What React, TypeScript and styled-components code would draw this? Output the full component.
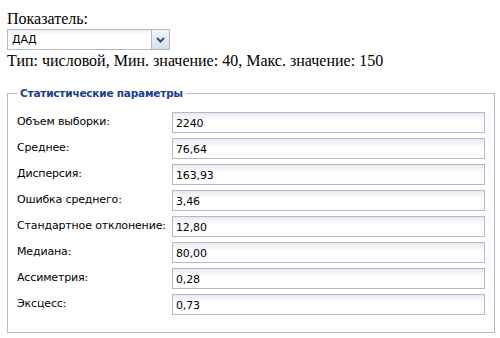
import styled, { createGlobalStyle } from "styled-components";

const stats = [
  { label: "Объем выборки:", value: "2240" },
  { label: "Среднее:", value: "76,64" },
  { label: "Дисперсия:", value: "163,93" },
  { label: "Ошибка среднего:", value: "3,46" },
  { label: "Стандартное отклонение:", value: "12,80" },
  { label: "Медиана:", value: "80,00" },
  { label: "Ассиметрия:", value: "0,28" },
  { label: "Эксцесс:", value: "0,73" },
];

const App = () => {
  return (
    <>
      <GlobalStyle />
      <StyledPage>
        <StyledCaption>Показатель:</StyledCaption>
        <StyledSelect>
          <span>ДАД</span>
          <StyledTrigger>
            <svg width="9" height="6" viewBox="0 0 9 6">
              <path d="M1 1 L4.5 4.5 L8 1" fill="none" stroke="#2d4f8c" strokeWidth="2" />
            </svg>
          </StyledTrigger>
        </StyledSelect>
        <StyledCaption>
          Тип: числовой, Мин. значение: 40, Макс. значение: 150
        </StyledCaption>
        <StyledFieldset>
          <legend>Статистические параметры</legend>
          {stats.map((s) => (
            <StyledRow key={s.label}>
              <label>{s.label}</label>
              <StyledField>{s.value}</StyledField>
            </StyledRow>
          ))}
        </StyledFieldset>
      </StyledPage>
    </>
  );
};

const GlobalStyle = createGlobalStyle`
  body {
    margin: 0;
    background: #fff;
  }
`;

const StyledPage = styled.div`
  padding: 9px 5px 0 7px;
  display: flex;
  flex-direction: column;
  align-items: flex-start;
`;

const StyledCaption = styled.div`
  font-family: "Liberation Serif", serif;
  font-size: 16px;
  line-height: 19px;
  color: #000;
`;

const StyledSelect = styled.div`
  width: 163px;
  height: 21px;
  box-sizing: border-box;
  border: 1px solid #b5b8c8;
  background: linear-gradient(#eef0f3, #fff 6px);
  display: flex;
  align-items: center;
  justify-content: space-between;
  font-family: "DejaVu Sans", sans-serif;
  font-size: 11px;
  color: #000;
  margin: 1px 0 1px;

  span {
    padding-left: 4px;
  }
`;

const StyledTrigger = styled.div`
  width: 17px;
  height: 19px;
  border-left: 1px solid #b5b8c8;
  background: linear-gradient(#f3f6fb, #d6deea);
  display: flex;
  align-items: center;
  justify-content: center;
`;

const StyledFieldset = styled.fieldset`
  align-self: stretch;
  margin: 17px 0 0;
  padding: 13px 9px 17px 9px;
  border: 1px solid #b5b8c8;
  display: flex;
  flex-direction: column;
  gap: 5px;

  legend {
    padding: 0 3px;
    margin-left: 0;
    font-family: "DejaVu Sans", sans-serif;
    font-size: 10.5px;
    letter-spacing: -0.2px;
    font-weight: bold;
    color: #15428b;
  }
`;

const StyledRow = styled.div`
  display: flex;
  align-items: center;
  font-family: "DejaVu Sans", sans-serif;
  font-size: 11px;
  letter-spacing: -0.15px;
  color: #000;

  label {
    width: 155px;
    margin-top: -3px;
  }
`;

const StyledField = styled.div`
  flex: 1;
  height: 21px;
  box-sizing: border-box;
  border: 1px solid #b5b8c8;
  background: linear-gradient(#e9ebf0, #fff 8px);
  padding: 3px 3px 0 3px;
  line-height: 16px;
`;

export default App;
